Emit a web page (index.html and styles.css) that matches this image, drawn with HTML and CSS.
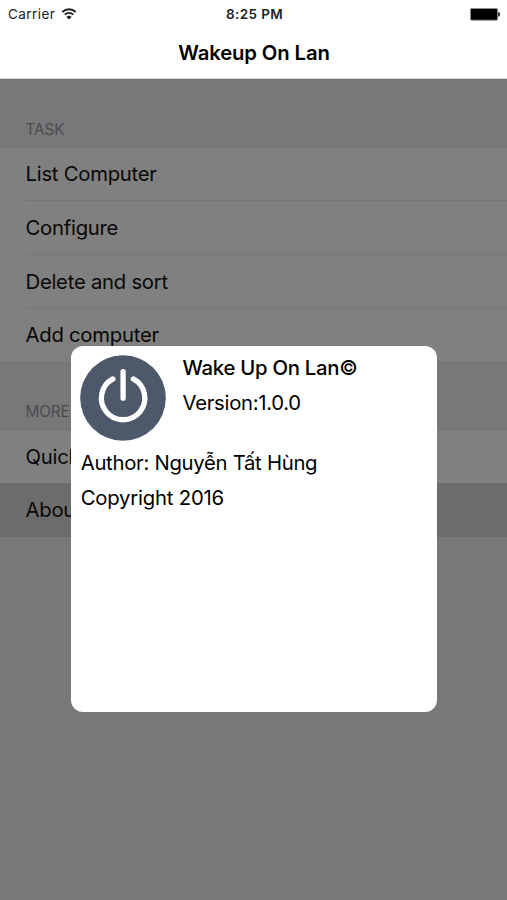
FILE: index.html
```html
<!DOCTYPE html>
<html lang="en">
<head>
<meta charset="utf-8">
<title>Wakeup On Lan</title>
<link rel="stylesheet" href="styles.css">
</head>
<body>
<div class="screen">
  <header class="top">
    <div class="status">
      <div class="carrier"><span class="carrier-name">Carrier</span>
        <svg class="wifi" viewBox="0 0 16 12" width="16" height="12">
          <path d="M1.3 4a9.5 9.5 0 0 1 13.4 0M3.7 6.7a6 6 0 0 1 8.6 0" fill="none" stroke="#222" stroke-width="1.8"/>
          <path d="M8 11.6L5.4 9a3.6 3.6 0 0 1 5.2 0z" fill="#222"/>
        </svg>
      </div>
      <span class="clock">8:25 PM</span>
      <svg class="battery" viewBox="0 0 31 13" width="31" height="13">
        <rect x=".4" y=".4" width="27.2" height="11.8" rx="1.2" fill="#000" stroke="#999" stroke-width=".8"/>
        <path d="M28.2 4c2.6 .4 2.6 4.4 0 4.8z" fill="#222"/>
      </svg>
    </div>
    <h1 class="title">Wakeup On Lan</h1>
  </header>
  <main class="content">
    <h2 class="section section-task">TASK</h2>
    <ul class="list">
      <li class="row"><span>List Computer</span></li>
      <li class="row"><span>Configure</span></li>
      <li class="row"><span>Delete and sort</span></li>
      <li class="row"><span>Add computer</span></li>
    </ul>
    <h2 class="section section-more">MORE</h2>
    <ul class="list">
      <li class="row"><span>Quick</span></li>
      <li class="row selected"><span>About</span></li>
    </ul>
  </main>
  <section class="dialog">
    <div class="app">
      <svg class="power" viewBox="0 0 86 86" width="86" height="86">
        <circle cx="43" cy="43" r="42.8" fill="#4d586a"/>
        <path d="M32.9 23.9a21.7 21.7 0 1 0 20.4 0M43.1 16.6v26.6" fill="none" stroke="#fff" stroke-width="5.3" stroke-linecap="round"/>
      </svg>
      <div class="facts">
        <p class="line name">Wake Up On Lan©</p>
        <p class="line version">Version:1.0.0</p>
      </div>
    </div>
    <p class="line author">Author: Nguyễn Tất Hùng</p>
    <p class="line copyright">Copyright 2016</p>
  </section>
</div>
</body>
</html>
```
FILE: styles.css
```css
* { box-sizing: border-box; margin: 0; padding: 0; }
body { font-family: Inter, "Liberation Sans", sans-serif; overflow: hidden; }
.screen { position: relative; width: 507px; height: 900px; background: #78787a; display: flex; flex-direction: column; }
.top { height: 79px; background: #fff; border-bottom: 1px solid #d8d8d8; flex: none; }
.status { height: 27px; padding: 0 6px 0 8px; display: grid; grid-template-columns: 1fr auto 1fr; align-items: center; font-size: 13.5px; line-height: 27px; color: #222; }
.carrier { display: flex; align-items: center; gap: 6px; }
.carrier-name { letter-spacing: .45px; padding-top: 1px; }
.wifi { margin-top: -1px; }
.clock { font-weight: 600; letter-spacing: .4px; }
.battery { justify-self: end; }
.title { font-size: 20.3px; font-weight: 600; line-height: 51px; text-align: center; letter-spacing: -.13px; padding-left: 1px; color: #000; }
.section { font-size: 15.3px; font-weight: 400; color: #4b4b4e; padding-left: 25.5px; line-height: 20px; letter-spacing: -.1px; display: flex; align-items: flex-end; }
.section-task { height: 69px; padding-bottom: 7px; border-bottom: 1px solid #757578; }
.section-more { height: 69px; padding-bottom: 7px; border-bottom: 1px solid #757578; }
.list { list-style: none; background: #808080; }
.row { height: 53.5px; padding-left: 25.5px; font-size: 20.3px; line-height: 53px; letter-spacing: -.25px; color: #080808; }
.section-task + .list .row:first-child { height: 52.4px; line-height: 52px; }
.section-task + .list .row:last-child { height: 53.6px; }
.row + .row { line-height: 55px; background: linear-gradient(#767677, #767677) 26px 0 / 100% 1px no-repeat; }
.row.selected, .row + .row.selected { background: #6c6c6c; line-height: 54px; }
.dialog { position: absolute; left: 70.5px; top: 345.5px; width: 366.9px; height: 366.5px; border-radius: 12px; background: #fff; padding: 9.5px 10px; color: #000; }
.app { display: flex; gap: 16.4px; height: 91px; margin-left: -.4px; }
.power { flex: none; }
.facts { margin-top: -4px; }
.line { font-size: 20.3px; line-height: 34.6px; letter-spacing: -.28px; white-space: nowrap; }
.name { font-weight: 500; letter-spacing: -.25px; }
.author, .copyright { padding-left: .2px; }
.copyright { letter-spacing: -.2px; }
```
